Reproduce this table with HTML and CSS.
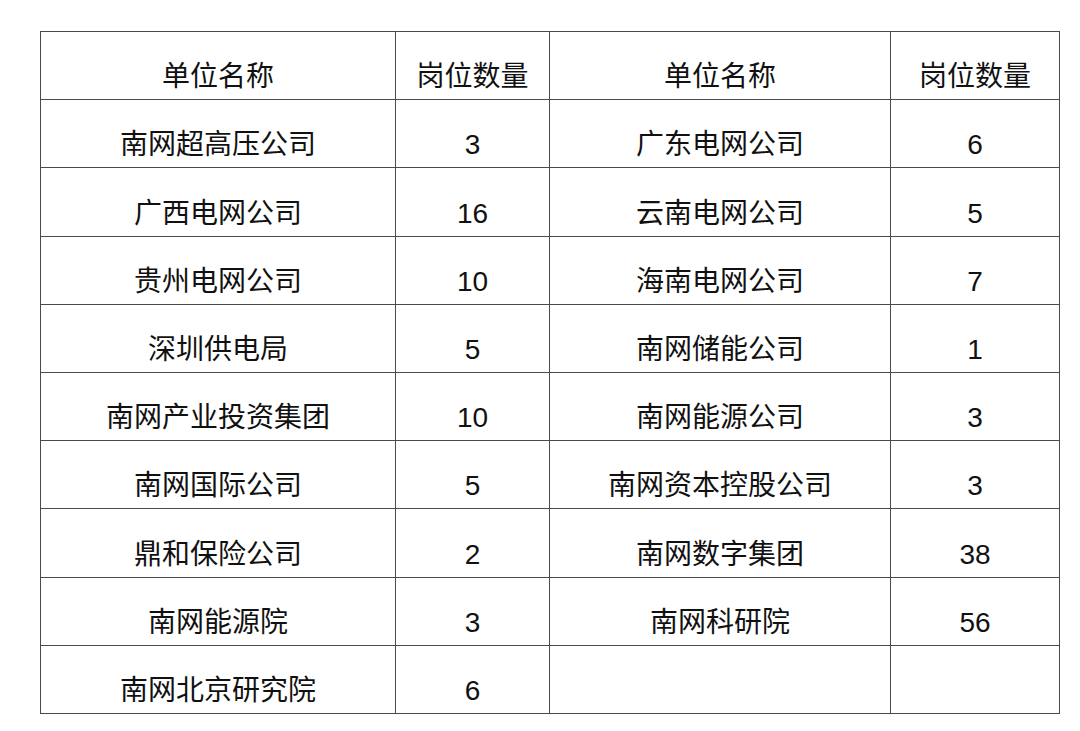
FILE: index.html
```html
<!DOCTYPE html>
<html lang="zh">
<head>
<meta charset="utf-8">
<link rel="stylesheet" href="styles.css">
</head>
<body>
<table class="grid">
  <colgroup>
    <col class="c1"><col class="c2"><col class="c3"><col class="c4">
  </colgroup>
  <tr><td>单位名称</td><td>岗位数量</td><td>单位名称</td><td>岗位数量</td></tr>
  <tr><td>南网超高压公司</td><td class="n">3</td><td>广东电网公司</td><td class="n">6</td></tr>
  <tr><td>广西电网公司</td><td class="n">16</td><td>云南电网公司</td><td class="n">5</td></tr>
  <tr><td>贵州电网公司</td><td class="n">10</td><td>海南电网公司</td><td class="n">7</td></tr>
  <tr><td>深圳供电局</td><td class="n">5</td><td>南网储能公司</td><td class="n">1</td></tr>
  <tr><td>南网产业投资集团</td><td class="n">10</td><td>南网能源公司</td><td class="n">3</td></tr>
  <tr><td>南网国际公司</td><td class="n">5</td><td>南网资本控股公司</td><td class="n">3</td></tr>
  <tr><td>鼎和保险公司</td><td class="n">2</td><td>南网数字集团</td><td class="n">38</td></tr>
  <tr><td>南网能源院</td><td class="n">3</td><td>南网科研院</td><td class="n">56</td></tr>
  <tr><td>南网北京研究院</td><td class="n">6</td><td></td><td></td></tr>
</table>
</body>
</html>
```

FILE: styles.css
```css
html, body {
  margin: 0;
  background: #ffffff;
}
body {
  padding: 31px 0 0 40px;
  font-family: "Liberation Sans", "Noto Sans CJK SC", sans-serif;
  color: #111111;
}
.grid {
  border-collapse: collapse;
  table-layout: fixed;
  width: 1019px;
}
.c1 { width: 355px; }
.c2 { width: 154px; }
.c3 { width: 341px; }
.c4 { width: 169px; }
.grid tr {
  height: 68.2px;
}
.grid td {
  border: 1.5px solid #4a4a4a;
  text-align: center;
  vertical-align: bottom;
  padding: 0 0 8px 0;
  font-size: 28px;
  line-height: 28px;
  white-space: nowrap;
}
```
